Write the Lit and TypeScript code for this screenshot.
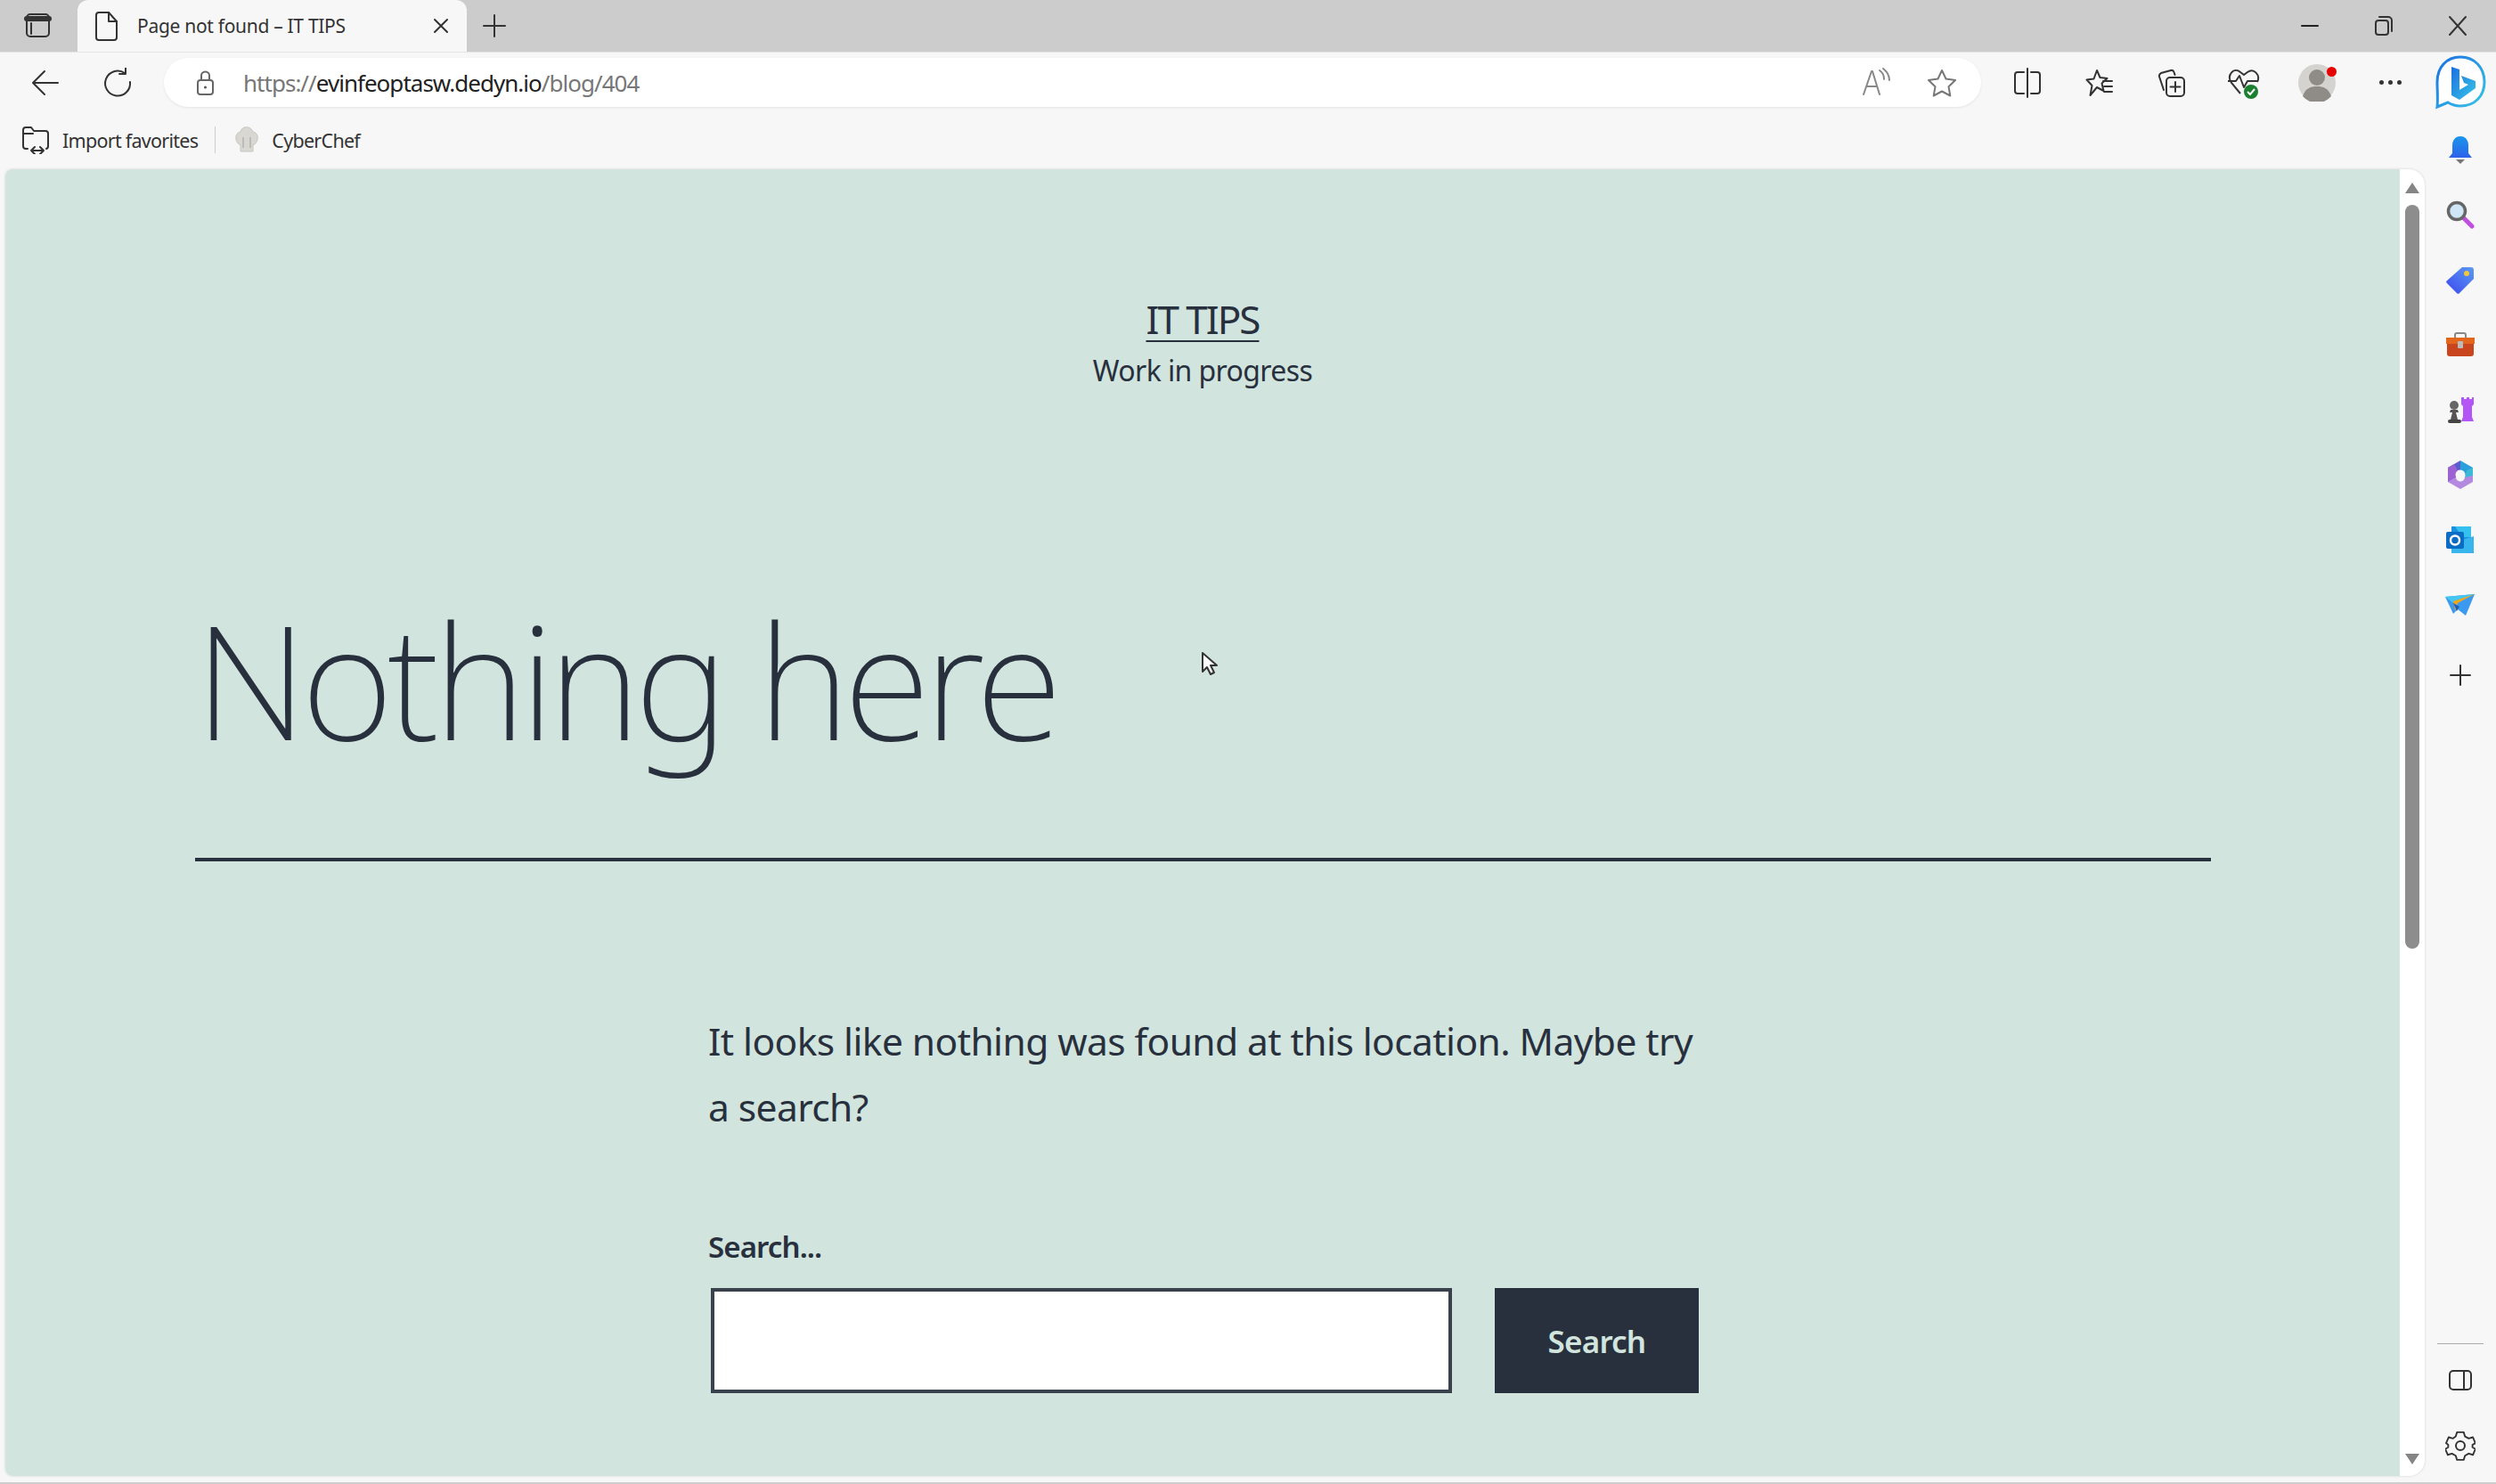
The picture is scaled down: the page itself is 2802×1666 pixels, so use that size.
import { LitElement, html, css, svg } from "lit";
import { customElement } from "lit/decorators.js";

const line = (size: number, body: unknown, stroke = "#333") => html`<svg
  width=${size}
  height=${size}
  viewBox="0 0 ${size} ${size}"
  fill="none"
  stroke=${stroke}
  stroke-width="2"
  stroke-linecap="round"
  stroke-linejoin="round"
>${body}</svg>`;

const icons = {
  tabs: line(32, svg`<rect x="3" y="3" width="25" height="25" rx="4"/><path d="M3 8h25" stroke-width="6"/><path d="M8 13v12"/>`),
  file: line(36, svg`<path d="M8 3h11l9 10v18a3 3 0 0 1-3 3H8a3 3 0 0 1-3-3V6a3 3 0 0 1 3-3z"/><path d="M19 3v10h9"/>`),
  close: line(22, svg`<path d="M4 4l14 14M18 4L4 18"/>`),
  plus: line(28, svg`<path d="M14 2v24M2 14h24"/>`),
  min: line(22, svg`<path d="M2 11h18"/>`, "#222"),
  restore: line(24, svg`<rect x="3" y="6" width="14" height="16" rx="3"/><path d="M7 2h10a4 4 0 0 1 4 4v12"/>`),
  winClose: line(24, svg`<path d="M3 2l18 20M21 2L3 22"/>`),
  back: line(32, svg`<path d="M30 16H3M15 3L2 16l13 13"/>`),
  refresh: line(34, svg`<path d="M25 6a14 14 0 1 0 6 10"/><path d="M26 0v7h-7"/>`),
  lock: line(28, svg`<rect x="6" y="11" width="17" height="16" rx="3" stroke="#666"/><path d="M10 11V6a4 4 0 0 1 9 0v5" stroke="#666"/><circle cx="14.500" cy="19" r="1.500" fill="#555" stroke="none"/>`),
  read: line(34, svg`<path d="M2 30L11 4h1l8 26M6 21h11" stroke="#888"/><path d="M20 3c3 2 5 6 5 10M24 1c4 3 7 8 7 13" stroke="#888"/>`),
  star: line(34, svg`<path d="M17 3l4.500 9.500 10.500 1.500-7.500 7.300 1.800 10.200-9.300-5-9.300 5 1.800-10.200L2 14l10.500-1.500z" stroke="#777"/>`),
  split: line(34, svg`<path d="M13 5H6a3 3 0 0 0-3 3v18a3 3 0 0 0 3 3h7M21 5h7a3 3 0 0 1 3 3v18a3 3 0 0 1-3 3h-7M17 1v32"/>`),
  favs: line(34, svg`<path d="M14 3l3.500 8 8 1-6 5.500 2 8.500-7.500-4-7.500 9 2-11-6-6.500 8-1z"/><path d="M21 15h10M22 21h9M22 27h9"/>`),
  coll: line(34, svg`<path d="M8 25L3 10c-.500-2 .500-3 2-4l11-3c2-.500 3 .500 3.500 2l1 3"/><rect x="11" y="11" width="20" height="21" rx="4"/><path d="M21 16v11M15.500 21.500h11"/>`),
  panel: line(28, svg`<rect x="2" y="3" width="24" height="21" rx="4"/><path d="M18 3v21"/>`),
  gear: line(34, svg`<path d="M13 2h8l1.500 5 4.500 2.500 5-1.500 3 7-3.500 2v3l3.500 2-3 7-5-1.500-4.500 2.500-1.500 5h-8l-1.500-5-4.500-2.500-5 1.500-3-7 3.500-2v-3L0 15l3-7 5 1.500L11.500 7z" transform="translate(1 0) scale(.94)"/><circle cx="17" cy="17" r="5"/>`),
  sidePlus: line(24, svg`<path d="M12 1v22M1 12h22"/>`),
};

const health = html`<svg width="38" height="38" viewBox="0 0 38 38" fill="none">
  <path d="M15 31L5 19C-1 10 8 1 15 7l4 3 4-3c7-5 15 3 11 11" stroke="#333" stroke-width="2"/>
  <path d="M1 17h9l4-6 5 13 4-7h12" stroke="#333" stroke-width="2" stroke-linejoin="round"/>
  <circle cx="27" cy="29" r="8" fill="#1a7f2e"/>
  <path d="M23 29l3 3 5-6" stroke="#fff" stroke-width="2" fill="none"/>
</svg>`;

const profile = html`<svg width="42" height="42" viewBox="0 0 42 42">
  <circle cx="21" cy="21" r="21" fill="#d5d3d0"/>
  <circle cx="21" cy="15" r="9" fill="#8f8b87"/>
  <path d="M5 36c3-9 9-11 16-11s13 2 16 11a21 21 0 0 1-32 0z" fill="#8f8b87"/>
</svg>`;

const bing = html`<svg width="58" height="62" viewBox="0 0 58 62">
  <defs>
    <linearGradient id="bg" x1="0" y1="0" x2="1" y2="1">
      <stop offset="0" stop-color="#1b6fe0"/><stop offset="1" stop-color="#37c6e8"/>
    </linearGradient>
  </defs>
  <path d="M29 2C13 2 3 14 3 30c0 9 1 20 0 28l12-5c5 3 10 4 14 4 16 0 27-11 27-27S45 2 29 2z" fill="#fff" stroke="url(#bg)" stroke-width="3"/>
  <path d="M19 13l9 3v23l10-6-5-2-3-8 16 6v8L28 50l-9-5z" fill="url(#bg)"/>
</svg>`;

const bell = html`<svg width="28" height="32" viewBox="0 0 28 32">
  <defs><linearGradient id="bl" x1="0" y1="0" x2="0" y2="1"><stop offset="0" stop-color="#1a95ec"/><stop offset="1" stop-color="#2e62ea"/></linearGradient></defs>
  <path d="M14 1c6 0 9 5 9 10v9l4 5H1l4-5v-9C5 6 8 1 14 1z" fill="url(#bl)"/>
  <path d="M9 27h10l-5 5z" fill="#777"/>
</svg>`;

const magnifier = html`<svg width="32" height="32" viewBox="0 0 32 32">
  <path d="M20 20l9 9" stroke="#c04fe0" stroke-width="5" stroke-linecap="round"/>
  <circle cx="12" cy="12" r="9.500" fill="#cfe6f7" stroke="#666" stroke-width="3.500"/>
</svg>`;

const tag = html`<svg width="32" height="32" viewBox="0 0 32 32">
  <defs><linearGradient id="tg" x1="1" y1="0" x2="0" y2="1"><stop offset="0" stop-color="#5b9af0"/><stop offset="1" stop-color="#3b48f0"/></linearGradient></defs>
  <path d="M18 2h10a3 3 0 0 1 3 3v10L15 31a2 2 0 0 1-3 0L1 20a2 2 0 0 1 0-3z" fill="url(#tg)"/>
  <circle cx="23" cy="9" r="3" fill="#f0c73a"/>
</svg>`;

const toolbox = html`<svg width="34" height="28" viewBox="0 0 34 28">
  <path d="M11 6V3a2 2 0 0 1 2-2h8a2 2 0 0 1 2 2v3" fill="none" stroke="#888" stroke-width="2"/>
  <path d="M1 6h32v7H1z" fill="#e2661c"/>
  <path d="M2 13h30v11a3 3 0 0 1-3 3H5a3 3 0 0 1-3-3z" fill="#c9451d"/>
  <rect x="14" y="10" width="6" height="8" rx="1" fill="#bbb"/>
</svg>`;

const chess = html`<svg width="32" height="32" viewBox="0 0 32 32">
  <path d="M17 2h3v2h3V2h3v2h3V2h2v8l-2 2v12l2 5H17l2-5V12l-2-2z" fill="#b455f5"/>
  <circle cx="9" cy="11" r="5" fill="#666"/>
  <path d="M5 16h8l1 3h-3l2 8H5l2-8H4z" fill="#555"/>
  <rect x="2" y="27" width="15" height="4" rx="2" fill="#444"/>
</svg>`;

const m365 = html`<svg width="32" height="34" viewBox="0 0 32 34">
  <path d="M16 1l14 8v9H20a5 5 0 0 0-4-6z" fill="#2b9fdc"/>
  <path d="M16 1L2 9v16l9-5a5 5 0 0 1 5-8z" fill="#5a5fd0"/>
  <path d="M2 9l7-4 5 9-3 6-9 5z" fill="#9c62d2"/>
  <path d="M2 25l14 8 14-8v-8l-9 2a5 5 0 0 1-10 1z" fill="#b38ae0"/>
  <path d="M30 9v9l-9 2 2-8z" fill="#3bb9d6"/>
  <circle cx="16" cy="17" r="5.500" fill="#f7f7f7"/>
</svg>`;

const outlook = html`<svg width="32" height="32" viewBox="0 0 32 32">
  <path d="M6 1h22v14l3 0v16H6z" fill="#1b8fe0"/>
  <path d="M18 16l13-4v17a2 2 0 0 1-2 2H6V23z" fill="#39b5ee"/>
  <path d="M10 1h18v12H18z" fill="#35c0f0"/>
  <rect x="0" y="7" width="20" height="19" rx="2" fill="#0b6cc4"/>
  <circle cx="10" cy="16.500" r="5" fill="none" stroke="#fff" stroke-width="2.500"/>
</svg>`;

const send = html`<svg width="34" height="26" viewBox="0 0 34 26">
  <path d="M0 4l33-3L23 25l-9-7-5 5z" fill="#3b9af0"/>
  <path d="M0 4l33-3L9 11z" fill="#43c7f2"/>
  <path d="M33 1L9 9l2 11 3-9z" fill="#f0a818"/>
  <path d="M9 11l4 9 3-5z" fill="#1c5fb8"/>
</svg>`;

const chef = html`<svg width="28" height="34" viewBox="0 0 28 34">
  <path d="M7 23C0 20 0 9 7 8c1-7 12-7 14 0 7 1 7 12 0 15v7H7z" fill="#d9d7d2" stroke="#c8c6c1"/>
  <path d="M10 14v12M18 14v12" stroke="#bbb" stroke-width="2"/>
</svg>`;

const importFav = line(32, svg`<path d="M7 26H5a3 3 0 0 1-3-3V5a3 3 0 0 1 3-3h6l3 4h13a3 3 0 0 1 3 3v14a3 3 0 0 1-2 3"/><path d="M2 9h11"/><path d="M11 28h14M15 24l-4 4 4 4M21 24l4 4-4 4"/>`);

@customElement("app-root")
export class AppRoot extends LitElement {
  static styles = css`
    :host {
      display: block;
      width: 2802px;
      height: 1666px;
      box-sizing: border-box;
      border-bottom: 2px solid #cdcdcd;
      overflow: hidden;
      background: #f7f7f7;
      font-family: "Noto Sans", "Open Sans", sans-serif;
      color: #28303d;
    }
    .tabstrip {
      height: 58px;
      background: #cccccc;
      display: flex;
      align-items: center;
      padding-right: 2px;
      box-sizing: border-box;
    }
    .slot {
      display: flex;
      align-items: center;
      justify-content: center;
      flex: none;
    }
    .tabs-btn {
      width: 85px;
      margin-right: 2px;
    }
    .tab {
      width: 437px;
      height: 58px;
      background: #f7f7f7;
      border-radius: 12px 12px 0 0;
      display: flex;
      align-items: center;
      box-sizing: border-box;
      padding: 0 18px 0 16px;
      font-size: 21px;
      letter-spacing: -0.3px;
      color: #333;
    }
    .tab .title {
      margin-left: 15px;
      flex: 1;
    }
    .new-tab {
      width: 62px;
    }
    .spacer {
      flex: 1;
    }
    .win {
      width: 83px;
    }
    .toolbar {
      height: 68px;
      display: flex;
      align-items: center;
      padding-left: 10px;
      border-top: 1px solid #e4e4e4;
      box-sizing: border-box;
    }
    .tool {
      width: 81px;
      height: 62px;
      position: relative;
    }
    .address {
      width: 2041px;
      height: 55px;
      margin: 0 11px 0 12px;
      background: #fff;
      border-radius: 28px;
      box-shadow: 0 1px 3px rgba(0, 0, 0, 0.08);
      display: flex;
      align-items: center;
      padding: 0 8px 0 32px;
      box-sizing: border-box;
      font-size: 26px;
      letter-spacing: -0.98px;
      color: #777;
    }
    .address .url {
      margin-left: 29px;
      flex: 1;
    }
    .address .host {
      color: #222;
    }
    .address .end {
      width: 73px;
    }
    .dot {
      position: absolute;
      top: 13px;
      right: 17px;
      width: 11px;
      height: 11px;
      border-radius: 50%;
      background: #e60000;
    }
    .more {
      display: flex;
      gap: 5px;
      margin-left: 5px;
    }
    .more i {
      width: 5px;
      height: 5px;
      border-radius: 50%;
      background: #333;
    }
    .profile {
      margin-left: 2px;
    }
    .lower {
      height: 1538px;
      display: flex;
    }
    .main {
      width: 2722px;
      flex: none;
    }
    .bookmarks {
      height: 64px;
      display: flex;
      align-items: center;
      padding: 0 0 2px 24px;
      box-sizing: border-box;
      font-size: 21.500px;
      letter-spacing: -0.72px;
      color: #333;
    }
    .bookmarks .label {
      margin-left: 14px;
    }
    .bookmarks .chef-label {
      margin-left: 14px;
    }
    .bookmarks .sep {
      width: 1px;
      height: 30px;
      background: #ccc;
      margin: 0 21px 0 19px;
    }
    .panel {
      width: 2716px;
      height: 1467px;
      margin-left: 6px;
      background: #fff;
      border-radius: 8px 18px 18px 8px;
      display: flex;
      overflow: hidden;
      box-shadow: 0 0 3px rgba(0, 0, 0, 0.15);
    }
    .page {
      width: 2688px;
      background: #d1e4dd;
      position: relative;
      box-sizing: border-box;
      padding-top: 142px;
      display: flex;
      flex-direction: column;
      align-items: center;
    }
    .site-name {
      font-size: 44px;
      font-weight: 400;
      line-height: 52px;
      letter-spacing: -2px;
      text-decoration: underline;
      text-decoration-thickness: 2px;
      text-underline-offset: 7px;
    }
    .tagline {
      font-size: 32px;
      line-height: 44px;
      margin-top: 10px;
      letter-spacing: -0.6px;
    }
    .wide {
      width: 2263px;
      margin-top: 210px;
      padding-bottom: 87px;
      border-bottom: 4px solid #28303d;
    }
    h1 {
      margin: 0;
      font-size: 178px;
      font-weight: 200;
      line-height: 228px;
      letter-spacing: -6.7px;
    }
    .narrow {
      width: 1112px;
      margin: 165px 0 0 2px;
    }
    .narrow p {
      margin: 0;
      font-size: 42.500px;
      line-height: 74px;
      letter-spacing: -0.58px;
    }
    .search-label {
      display: block;
      margin-top: 98px;
      font-size: 33px;
      font-weight: 600;
      line-height: 44px;
      letter-spacing: -0.9px;
    }
    .search-row {
      display: flex;
      margin-top: 24px;
      padding-left: 3px;
    }
    .search-input {
      width: 832px;
      height: 118px;
      box-sizing: border-box;
      border: 4px solid #39414d;
      background: #fff;
    }
    .search-btn {
      width: 229px;
      height: 118px;
      margin-left: 48px;
      background: #28303d;
      color: #d1e4dd;
      display: flex;
      align-items: center;
      justify-content: center;
      font-size: 35px;
      font-weight: 600;
      letter-spacing: -0.8px;
    }
    .cursor {
      position: absolute;
      left: 1342px;
      top: 541px;
    }
    .scroll {
      width: 28px;
      display: flex;
      flex-direction: column;
      align-items: center;
      padding-top: 15px;
      box-sizing: border-box;
    }
    .thumb {
      width: 16px;
      height: 835px;
      background: #8d8d8d;
      border-radius: 8px;
      margin-top: 13px;
    }
    .scroll .grow {
      flex: 1;
    }
    .arrow-down {
      margin-bottom: 13px;
    }
    .sidebar {
      flex: 1;
      display: flex;
      flex-direction: column;
      align-items: center;
      padding-top: 5px;
      box-sizing: border-box;
    }
    .side-item {
      height: 73px;
      width: 100%;
      display: flex;
      align-items: center;
      justify-content: center;
      flex: none;
    }
    .side-add {
      margin-top: 6px;
    }
    .rule {
      width: 52px;
      height: 1px;
      background: #aaa;
      margin-top: auto;
    }
    .side-panel {
      margin-top: 4px;
    }
    .side-gear {
      margin-bottom: 5px;
    }
  `;

  render() {
    const side = [bell, magnifier, tag, toolbox, chess, m365, outlook, send];
    return html`
      <div class="tabstrip">
        <div class="slot tabs-btn">${icons.tabs}</div>
        <div class="tab">
          ${icons.file}
          <span class="title">Page not found – IT TIPS</span>
          ${icons.close}
        </div>
        <div class="slot new-tab">${icons.plus}</div>
        <div class="spacer"></div>
        <div class="slot win">${icons.min}</div>
        <div class="slot win">${icons.restore}</div>
        <div class="slot win">${icons.winClose}</div>
      </div>
      <div class="toolbar">
        <div class="slot tool">${icons.back}</div>
        <div class="slot tool">${icons.refresh}</div>
        <div class="address">
          ${icons.lock}
          <span class="url">https://<span class="host">evinfeoptasw.dedyn.io</span>/blog/404</span>
          <span class="slot end">${icons.read}</span>
          <span class="slot end">${icons.star}</span>
        </div>
        <div class="slot tool">${icons.split}</div>
        <div class="slot tool">${icons.favs}</div>
        <div class="slot tool">${icons.coll}</div>
        <div class="slot tool">${health}</div>
        <div class="slot tool"><span class="slot profile">${profile}</span><span class="dot"></span></div>
        <div class="slot tool"><div class="more"><i></i><i></i><i></i></div></div>
        <div class="slot tool">${bing}</div>
      </div>
      <div class="lower">
        <div class="main">
          <div class="bookmarks">
            ${importFav}
            <span class="label">Import favorites</span>
            <span class="sep"></span>
            ${chef}
            <span class="chef-label">CyberChef</span>
          </div>
          <div class="panel">
            <div class="page">
              <div class="site-name">IT TIPS</div>
              <div class="tagline">Work in progress</div>
              <div class="wide"><h1>Nothing here</h1></div>
              <div class="narrow">
                <p>It looks like nothing was found at this location. Maybe try a search?</p>
                <label class="search-label">Search...</label>
                <div class="search-row">
                  <div class="search-input"></div>
                  <div class="search-btn">Search</div>
                </div>
              </div>
              <svg class="cursor" width="20" height="28" viewBox="0 0 20 28">
                <path d="M2 2v21l5-5 4 8 4-2-4-8h7z" fill="#fff" stroke="#333" stroke-width="2" stroke-linejoin="round"/>
              </svg>
            </div>
            <div class="scroll">
              <svg width="16" height="12" viewBox="0 0 16 12"><path d="M8 0l8 12H0z" fill="#858585"/></svg>
              <div class="thumb"></div>
              <div class="grow"></div>
              <svg class="arrow-down" width="16" height="12" viewBox="0 0 16 12"><path d="M0 0h16L8 12z" fill="#858585"/></svg>
            </div>
          </div>
        </div>
        <div class="sidebar">
          ${side.map((icon) => html`<div class="side-item">${icon}</div>`)}
          <div class="side-item side-add">${icons.sidePlus}</div>
          <div class="rule"></div>
          <div class="side-item side-panel">${icons.panel}</div>
          <div class="side-item side-gear">${icons.gear}</div>
        </div>
      </div>
    `;
  }
}
